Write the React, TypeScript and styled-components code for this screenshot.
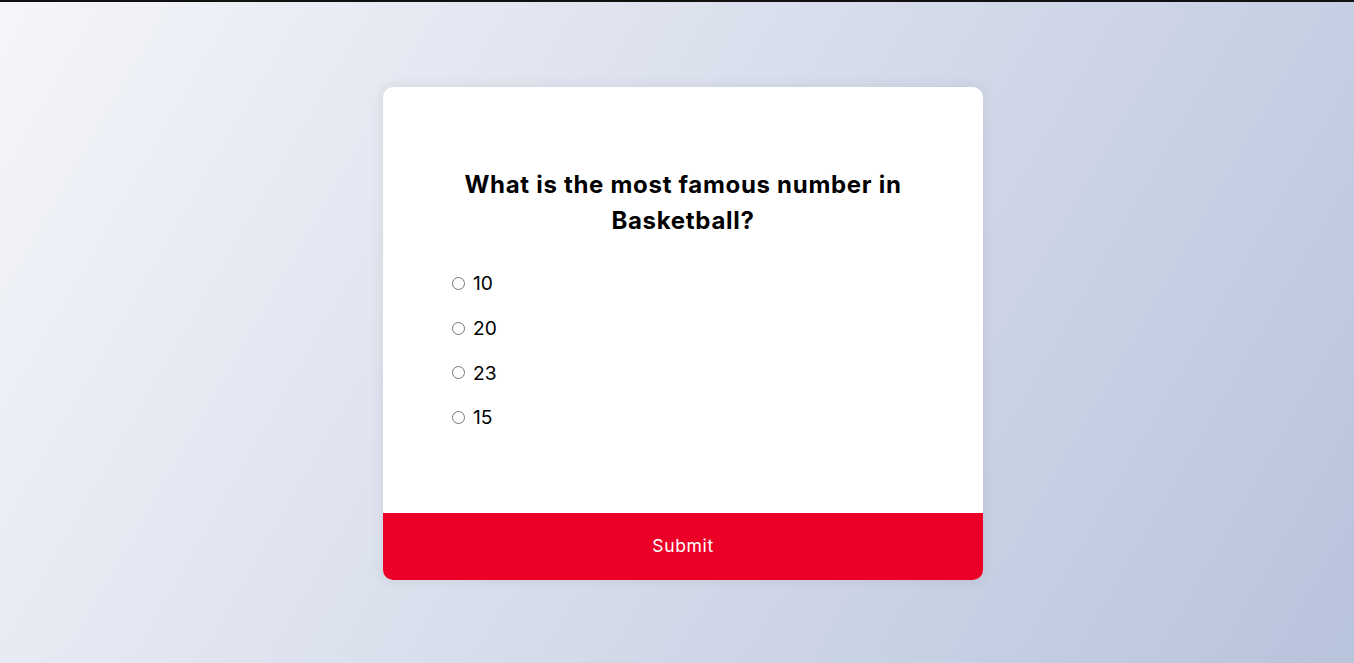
import React from "react";
import styled, { createGlobalStyle } from "styled-components";

const GlobalStyle = createGlobalStyle`
  * { box-sizing: border-box; }
  html, body { margin: 0; padding: 0; }
  body {
    background-color: #b8c6db;
    background-image: linear-gradient(300deg, #b8c3dc 0%, #f5f6fa 100%);
    font-family: Inter, "Open Sans", sans-serif;
    border-top: 2px solid #111;
    height: 100vh;
    overflow: hidden;
  }
  #root { height: 100%; }
`;

const Page = styled.div`
  height: 100%;
  display: flex;
  align-items: center;
  justify-content: center;
  padding: 2px 0 0 12px;
`;

const Card = styled.div`
  width: 600px;
  background: #fff;
  border-radius: 10px;
  box-shadow: 0 0 10px 2px rgba(100, 100, 100, 0.1);
  overflow: hidden;
`;

const Header = styled.div`
  padding: 64px 64px 63px;
`;

const Title = styled.h2`
  margin: 0;
  padding: 16px;
  text-align: center;
  font-size: 24px;
  line-height: 36px;
  font-weight: 700;
  letter-spacing: 0.7px;
  color: #000;
`;

const List = styled.ul`
  list-style: none;
  margin: 0;
  padding: 14px 0 18px;
  display: flex;
  flex-direction: column;
  gap: 16px;
`;

const Item = styled.li`
  font-size: 19.2px;
  line-height: 28.8px;
  display: flex;
  align-items: center;
  color: #000;
`;

const Radio = styled.input`
  width: 13px;
  height: 13px;
  margin: 0 8px 0 5px;
`;

const Submit = styled.button`
  display: block;
  width: 100%;
  border: none;
  background: #ec0028;
  color: #fff;
  font-family: inherit;
  font-size: 17.6px;
  line-height: 26.4px;
  letter-spacing: 0.6px;
  padding: 20.3px;
  cursor: pointer;
`;

const answers = ["10", "20", "23", "15"];

export default function App() {
  return (
    <>
      <GlobalStyle />
      <Page>
        <Card>
          <Header>
            <Title>What is the most famous number in Basketball?</Title>
            <List>
              {answers.map((a, i) => (
                <Item key={a}>
                  <Radio type="radio" name="answer" id={`a${i}`} />
                  <label htmlFor={`a${i}`}>{a}</label>
                </Item>
              ))}
            </List>
          </Header>
          <Submit>Submit</Submit>
        </Card>
      </Page>
    </>
  );
}
